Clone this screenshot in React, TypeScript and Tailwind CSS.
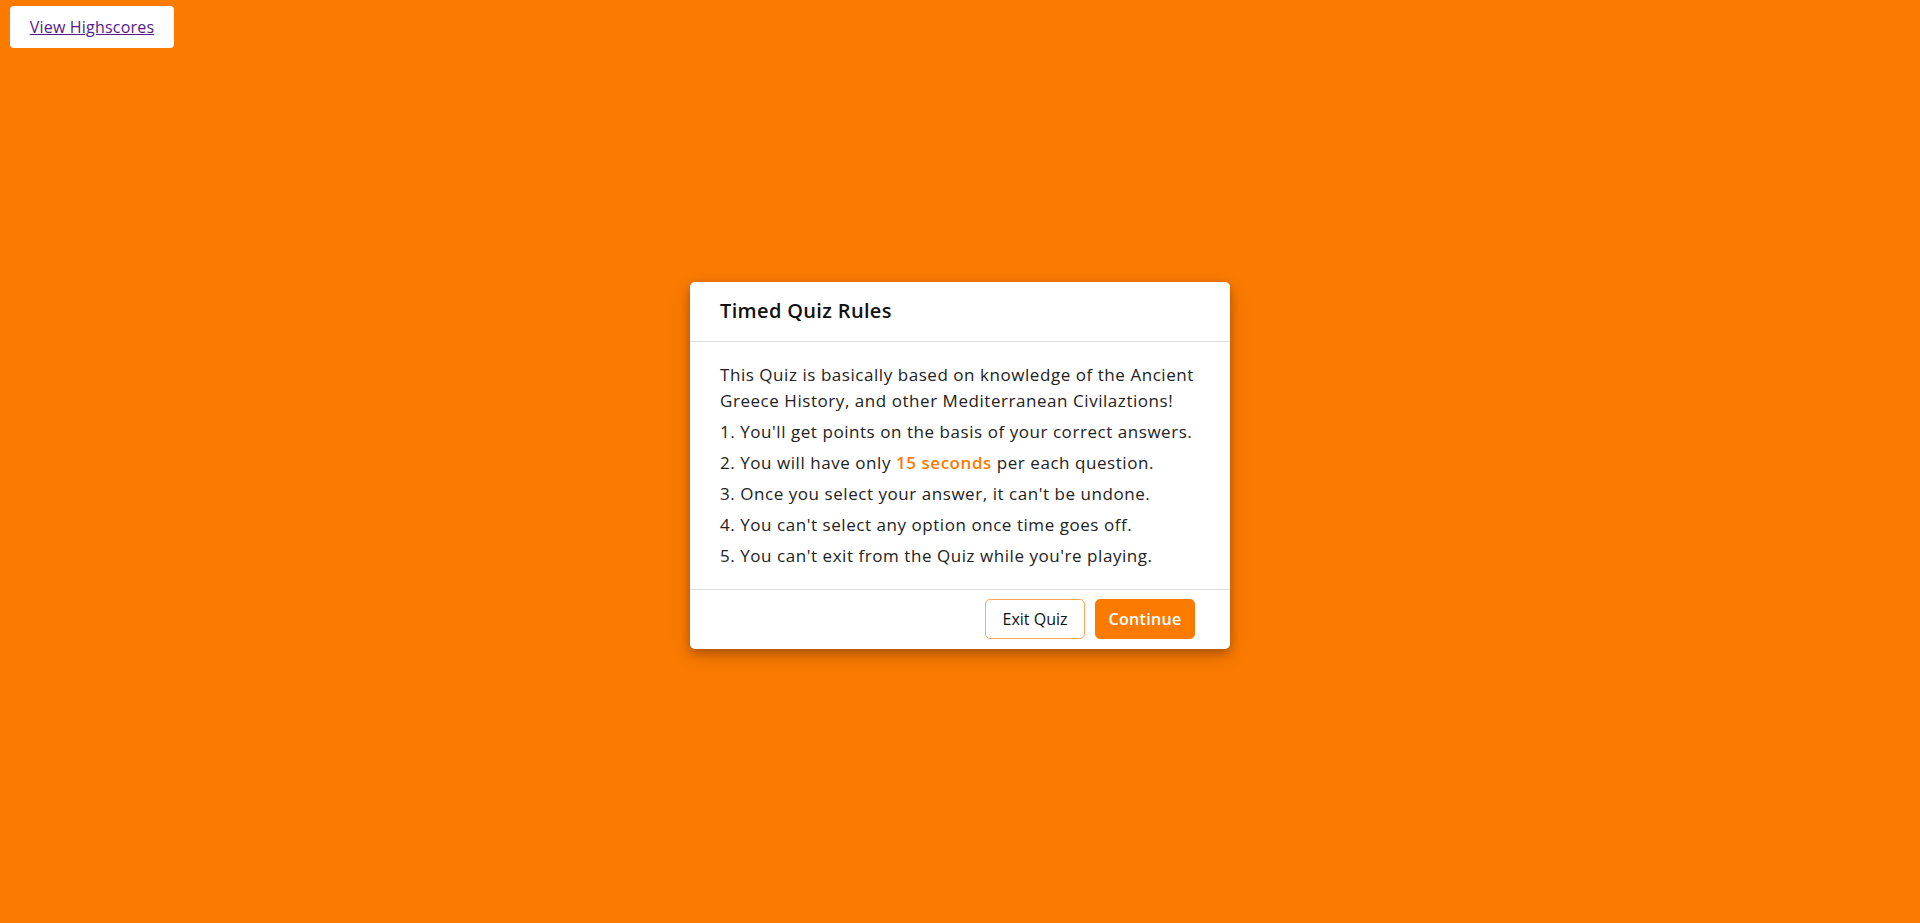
const RULES = [
  "1. You'll get points on the basis of your correct answers.",
  "2. You will have only",
  "3. Once you select your answer, it can't be undone.",
  "4. You can't select any option once time goes off.",
  "5. You can't exit from the Quiz while you're playing.",
];

export default function App() {
  return (
    <div className="relative flex h-screen w-full items-center justify-center bg-[#fb7b00] pt-[7px] font-['Open_Sans',sans-serif]">
      {/* top-left link button */}
      <a
        href="#"
        className="absolute left-[10px] top-[6px] flex h-[42px] w-[164px] items-center justify-center rounded-[4px] bg-white text-[16px] tracking-[0.2px] text-[#551a8b] underline"
      >
        View Highscores
      </a>

      {/* rules card */}
      <div className="w-[540px] rounded-[5px] bg-white shadow-[0_4px_8px_0_rgba(0,0,0,0.2),0_6px_20px_0_rgba(0,0,0,0.19)]">
        <div className="flex h-[60px] items-center border-b border-[#dcdcdc] px-[30px] text-[20px] font-semibold tracking-[0.35px] text-[#111]">
          Timed Quiz Rules
        </div>

        <div className="px-[30px] py-[15px] text-[17px] leading-[26px] tracking-[0.55px] text-[#222]">
          <div className="my-[5px]">
            This Quiz is basically based on knowledge of the Ancient Greece
            History, and other Mediterranean Civilaztions!
          </div>
          {RULES.map((r, i) => (
            <div key={i} className="my-[5px]">
              {r}
              {i === 1 && (
                <>
                  {" "}
                  <span className="font-semibold text-[#fb7b00]">15 seconds</span>{" "}
                  per each question.
                </>
              )}
            </div>
          ))}
        </div>

        <div className="flex h-[60px] items-center justify-end gap-[10px] border-t border-[#dcdcdc] px-[35px]">
          <button className="h-[40px] w-[100px] rounded-[5px] border border-[#fda85a] bg-white text-[16px] text-[#111]">
            Exit Quiz
          </button>
          <button className="h-[40px] w-[100px] rounded-[5px] border border-[#fb7b00] bg-[#fb7b00] text-[16px] font-semibold tracking-[0.3px] text-white">
            Continue
          </button>
        </div>
      </div>
    </div>
  );
}
